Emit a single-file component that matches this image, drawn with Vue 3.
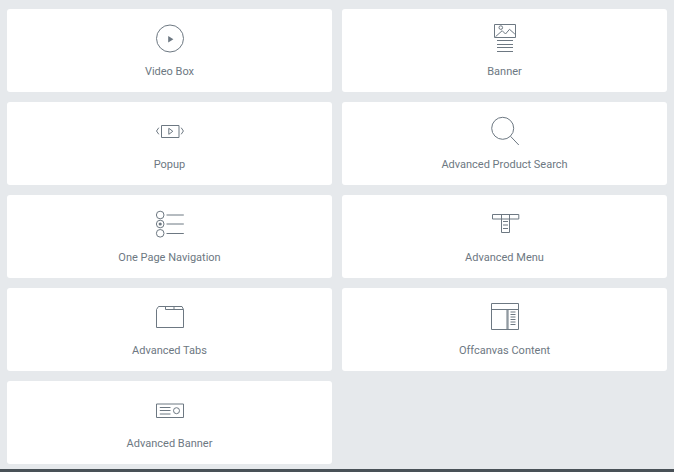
<script setup>
const circle = (cx, cy, r) =>
  `M${cx - r} ${cy}a${r} ${r} 0 1 0 ${r * 2} 0a${r} ${r} 0 1 0 ${-r * 2} 0Z`;

// every icon is drawn on a 40x40 box
const widgets = [
  {
    name: "Video Box",
    d: circle(20, 19.5, 13.5),
    fill: "M18.2 17v6.6l5.2-3.3Z",
  },
  {
    name: "Banner",
    d:
      "M9.5 5.5h21v13h-21ZM10.5 17.7l6.7-6 3.3 3.3 4-4.7 5.3 4.7M12 21.5h16M12 25.5h16M12 28.5h16M12 32.5h16" +
      circle(15.8, 8.6, 1.8),
  },
  {
    name: "Popup",
    d: "M11.5 13.5h17.5v12H11.5ZM18.8 16.3v6l4-3ZM8.8 15.7l-2.3 3.3 2.3 3.3M31.2 15.7l2.2 3.3-2.2 3.3",
  },
  {
    name: "Advanced Product Search",
    d: circle(17.7, 16.3, 11) + "M25.5 24.3l8.3 8.7",
  },
  {
    name: "One Page Navigation",
    d:
      circle(10.2, 10, 3.8) +
      circle(10.2, 19, 3.8) +
      circle(10.2, 28.3, 3.8) +
      "M16.5 10h17.3M16.5 19h17.3M16.5 28.5h17.3",
    fill: circle(10.2, 19, 1.6),
  },
  {
    name: "Advanced Menu",
    d: "M7.5 9.5h26.3v4.5H7.5ZM16.5 9.5V27.5h8V9.5M18 16.5h5M18 20h5M18 23.5h5",
  },
  {
    name: "Advanced Tabs",
    d: "M6.5 29.5V11.5l2-3h23.5l1.5 3v18ZM15.5 8.5v3h18M24 8.5v3",
  },
  {
    name: "Offcanvas Content",
    d: "M6.5 5.5h27v26h-27ZM6.5 11.5h27M22 11.5v20M23 11.5v20M25.5 14h5M25.5 16.5h5M25.5 19h5M25.5 21.5h5M25.5 24h5M25.5 26.5h5",
  },
  {
    name: "Advanced Banner",
    d:
      "M6.5 13h27v13.5h-27ZM9.8 16.5h10.7M9.8 19.5h10.7M9.8 23h10.7" +
      circle(26.5, 19.7, 3),
  },
];
</script>

<template>
  <div class="panel">
    <div class="grid">
      <div class="card" v-for="w in widgets" :key="w.name">
        <svg class="icon" viewBox="0 0 40 40" width="40" height="40">
          <path :d="w.d" fill="none" stroke="#6d7882" stroke-width="1" />
          <path v-if="w.fill" :d="w.fill" fill="#6d7882" />
        </svg>
        <div class="title">{{ w.name }}</div>
      </div>
    </div>
    <div class="bar"></div>
  </div>
</template>

<style scoped>
.panel {
  display: flex;
  flex-direction: column;
  height: 472px;
  background: #e6e9ec;
  overflow: hidden;
}
.grid {
  display: grid;
  grid-template-columns: 325px 325px;
  grid-auto-rows: 83px;
  gap: 10px;
  padding: 9px 7px 0;
}
.card {
  display: flex;
  flex-direction: column;
  align-items: center;
  padding-top: 10px;
  background: #fff;
  border-radius: 3px;
}
.icon {
  display: block;
  flex: none;
}
.title {
  margin-top: 6px;
  font-family: Roboto, "Liberation Sans", sans-serif;
  font-size: 11px;
  line-height: 13px;
  color: #6d7882;
}
.bar {
  margin-top: auto;
  height: 3px;
  background: #495157;
}
</style>

<style>
html,
body {
  margin: 0;
}
</style>
